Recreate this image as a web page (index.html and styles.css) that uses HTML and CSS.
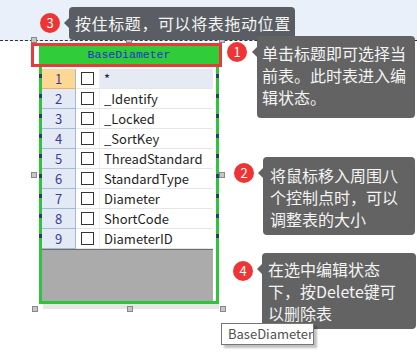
FILE: index.html
```html
<!DOCTYPE html>
<html>
<head>
  <title>BaseDiameter</title>
  <link rel="stylesheet" href="styles.css">
</head>
<body>
  <div class="stage">
    <div class="topband"></div>

    <!-- 表 -->
    <div class="entity">
      <div class="entity-head">BaseDiameter</div>
      <div class="entity-body">
        <div class="rows">
          <div class="row current"><span class="num">1</span><span class="chk"><i class="box"></i></span><span class="name">*</span></div>
          <div class="row"><span class="num">2</span><span class="chk"><i class="box"></i></span><span class="name">_Identify</span></div>
          <div class="row"><span class="num">3</span><span class="chk"><i class="box"></i></span><span class="name">_Locked</span></div>
          <div class="row"><span class="num">4</span><span class="chk"><i class="box"></i></span><span class="name">_SortKey</span></div>
          <div class="row"><span class="num">5</span><span class="chk"><i class="box"></i></span><span class="name">ThreadStandard</span></div>
          <div class="row"><span class="num">6</span><span class="chk"><i class="box"></i></span><span class="name">StandardType</span></div>
          <div class="row"><span class="num">7</span><span class="chk"><i class="box"></i></span><span class="name">Diameter</span></div>
          <div class="row"><span class="num">8</span><span class="chk"><i class="box"></i></span><span class="name">ShortCode</span></div>
          <div class="row"><span class="num">9</span><span class="chk"><i class="box"></i></span><span class="name">DiameterID</span></div>
        </div>
        <div class="empty"></div>
      </div>
    </div>
    <div class="select-mark"></div>

    <!-- 八个控制点 -->
    <span class="handle h-tl"></span>
    <span class="handle h-tm"></span>
    <span class="handle h-tr"></span>
    <span class="handle h-ml"></span>
    <span class="handle h-mr"></span>
    <span class="handle h-bl"></span>
    <span class="handle h-bm"></span>
    <span class="handle h-br"></span>

    <!-- 说明 -->
    <span class="badge b3">3</span>
    <div class="tip tip-3">按住标题，可以将表拖动位置</div>

    <span class="badge b1">1</span>
    <div class="tip tip-1">单击标题即可选择当<br>前表。此时表进入编<br>辑状态。</div>

    <span class="badge b2">2</span>
    <div class="tip tip-2">将鼠标移入周围八<br>个控制点时，可以<br>调整表的大小</div>

    <span class="badge b4">4</span>
    <div class="tip tip-4">在选中编辑状态<br>下，按Delete键可<br>以删除表</div>

    <div class="hover-tip">BaseDiameter</div>
  </div>
</body>
</html>
```

FILE: styles.css
```css
/* 表编辑说明图 */
body {
  margin: 0;
  font-family: "Noto Sans CJK SC", "Noto Sans", sans-serif;
  background: #fff;
}

.stage {
  position: relative;
  width: 417px;
  height: 362px;
  overflow: hidden;
}

.topband {
  height: 40px;
  background: #eaf0fa;
  border-bottom: 1px dashed #333;
}

.entity {
  position: absolute;
  left: 39px;
  top: 46px;
  width: 180px;
}

.entity-head {
  height: 21px;
  background: #30cc3a;
  color: #2233c4;
  font-family: "Liberation Mono", monospace;
  font-size: 11.5px;
  line-height: 17px;
  text-align: center;
}

.entity-body {
  position: relative;
  background: #fff;
  border: 3px solid #30c43e;
  border-top: none;
  padding: 2px 3px 0 0;
  box-shadow: 2px 7px 0 -2px #e6e6e6;
}

/* 边框上的深色小段 */
.entity-body::before,
.entity-body::after {
  content: "";
  position: absolute;
  top: 2px;
  width: 3px;
  height: 180px;
  background: repeating-linear-gradient(to bottom, transparent 0 5px, #2c3a66 5px 9px, transparent 9px 20px);
}

.entity-body::before {
  left: -3px;
}

.entity-body::after {
  right: -3px;
}

.row {
  display: grid;
  grid-template-columns: 34px 24px 113px;
  height: 20px;
  font-size: 13px;
  line-height: 19px;
}

.row > span {
  box-sizing: border-box;
  height: 20px;
  border-bottom: 1px solid #e6e6e6;
}

.row .num {
  background: #e3eaf6;
  border-right: 1px solid #a3bad4;
  border-bottom-color: #a3bad4;
  color: #3b3b98;
  text-align: center;
}

.row .chk {
  border-right: 1px solid #efefef;
  padding: 3px 0 0 5px;
}

.box {
  display: block;
  box-sizing: border-box;
  width: 13px;
  height: 13px;
  border: 1px solid #333;
  background: #fff;
}

.row .name {
  padding-left: 4px;
  color: #1e1e1e;
}

.row.current .num {
  background: #fdd794;
  border-bottom-color: #efb264;
}

.row.current .name {
  background: #e6eaf4;
}

.empty {
  box-sizing: border-box;
  height: 52px;
  background: #ababab;
  border-top: 1px solid #6e6e6e;
}

.select-mark {
  position: absolute;
  left: 31px;
  top: 43px;
  width: 191px;
  height: 24px;
  box-sizing: border-box;
  border: 3px solid #e8393b;
}

.handle {
  position: absolute;
  box-sizing: border-box;
  width: 6px;
  height: 6px;
  background: #c6c6c6;
  border: 1px solid #888;
}

.h-tl { left: 31px; top: 37px; }
.h-tm { left: 126px; top: 37px; }
.h-tr { left: 219px; top: 37px; }
.h-ml { left: 31px; top: 172px; }
.h-mr { left: 219px; top: 172px; }
.h-bl { left: 32px; top: 306px; }
.h-bm { left: 127px; top: 306px; }
.h-br { left: 220px; top: 306px; }

.badge {
  position: absolute;
  width: 20px;
  height: 20px;
  border-radius: 50%;
  background: #ee3535;
  color: #fff;
  font-size: 13px;
  line-height: 20px;
  text-align: center;
}

.b3 { left: 40px; top: 13px; }
.b1 { left: 227px; top: 42px; }
.b2 { left: 234px; top: 163px; }
.b4 { left: 233px; top: 261px; }

.tip {
  position: absolute;
  box-sizing: border-box;
  background: #636363;
  color: #f4f4f4;
  font-size: 16px;
  line-height: 22px;
  border-radius: 4px;
  white-space: nowrap;
}

.tip::before {
  content: "";
  position: absolute;
  left: -5px;
  top: 11px;
  border-top: 5px solid transparent;
  border-bottom: 5px solid transparent;
  border-right: 5px solid #636363;
}

.tip-3 {
  left: 69px;
  top: 7px;
  width: 226px;
  height: 33px;
  padding: 0 6px;
  line-height: 33px;
  background: #5a5e64;
  letter-spacing: 0.6px;
}

.tip-3::before {
  border-right-color: #5a5e64;
}

.tip-1 {
  left: 257px;
  top: 36px;
  width: 158px;
  padding: 6px 5px 10px;
}

.tip-2 {
  left: 263px;
  top: 157px;
  width: 152px;
  padding: 7px 7px 5px;
}

.tip-4 {
  left: 262px;
  top: 253px;
  width: 154px;
  padding: 5px 6px 5px;
}

.hover-tip {
  position: absolute;
  left: 221px;
  top: 323px;
  width: 93px;
  height: 22px;
  box-sizing: border-box;
  border: 1px solid #767676;
  background: #fff;
  padding-left: 6px;
  color: #505050;
  font-size: 13px;
  line-height: 20px;
  box-shadow: 3px 3px 2px rgba(0, 0, 0, 0.25);
}
```
